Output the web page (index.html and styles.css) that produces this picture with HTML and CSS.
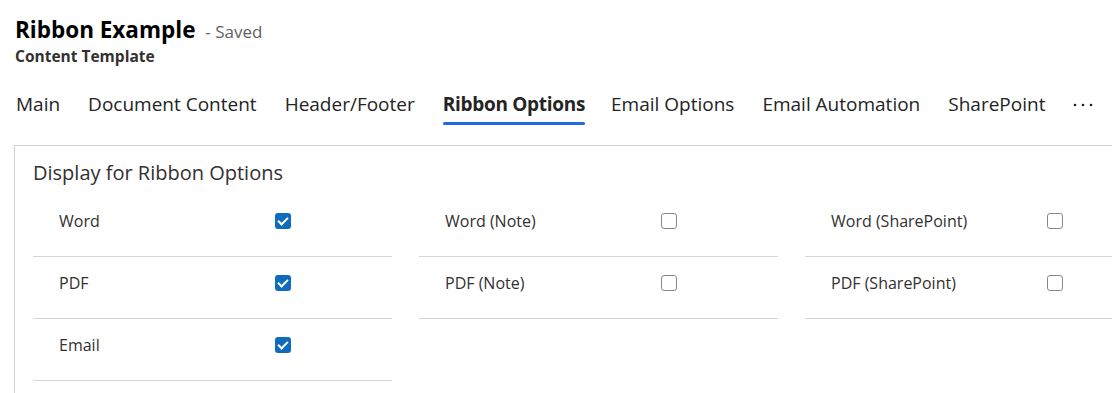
FILE: index.html
```html
<!DOCTYPE html>
<html lang="en">
<head>
    <meta charset="UTF-8">
    <meta name="viewport" content="width=device-width, initial-scale=1.0">
    <title>Ribbon Example - Content Template</title>
    <link rel="stylesheet" href="styles.css">
</head>
<body>
    <!-- Record header -->
    <header class="record-header">
        <h1 class="record-title">Ribbon Example <span class="record-status">- Saved</span></h1>
        <div class="record-type">Content Template</div>
    </header>

    <!-- Tabs -->
    <nav class="tabs">
        <a class="tab">Main</a>
        <a class="tab">Document Content</a>
        <a class="tab">Header/Footer</a>
        <a class="tab active">Ribbon Options</a>
        <a class="tab">Email Options</a>
        <a class="tab">Email Automation</a>
        <a class="tab">SharePoint</a>
        <a class="tab more" aria-label="More tabs">
            <svg width="22" height="6" viewBox="0 0 22 6"><circle cx="2" cy="3" r="1.3"/><circle cx="10" cy="3" r="1.3"/><circle cx="18" cy="3" r="1.3"/></svg>
        </a>
    </nav>

    <!-- Section -->
    <section class="section">
        <h2>Display for Ribbon Options</h2>
        <div class="fields">
            <div class="column">
                <div class="field"><span>Word</span><span class="check checked"></span></div>
                <div class="field"><span>PDF</span><span class="check checked"></span></div>
                <div class="field"><span>Email</span><span class="check checked"></span></div>
            </div>
            <div class="column">
                <div class="field"><span>Word (Note)</span><span class="check"></span></div>
                <div class="field"><span>PDF (Note)</span><span class="check"></span></div>
            </div>
            <div class="column">
                <div class="field"><span>Word (SharePoint)</span><span class="check"></span></div>
                <div class="field"><span>PDF (SharePoint)</span><span class="check"></span></div>
            </div>
        </div>
    </section>
</body>
</html>
```

FILE: styles.css
```css
body {
    font-family: "Open Sans", "Noto Sans", Arial, sans-serif;
    margin: 0;
    padding: 16px 0 0;
    background-color: #fff;
    color: #242424;
    overflow: hidden;
}
.record-header {
    padding-left: 15px;
}
.record-title {
    margin: 0;
    font-size: 22.5px;
    line-height: 28px;
    font-weight: 700;
    color: #000;
}
.record-status {
    margin-left: 4px;
    font-size: 17px;
    font-weight: 400;
    color: #616161;
}
.record-type {
    font-size: 15.5px;
    line-height: 20px;
    font-weight: 700;
    color: #323130;
}
.tabs {
    display: flex;
    margin-top: 14px;
    padding-left: 2px;
}
.tab {
    padding: 12px 14px 0;
    font-size: 19px;
    line-height: 24px;
    color: #242424;
    white-space: nowrap;
    cursor: pointer;
}
.tab::after {
    content: "";
    display: block;
    height: 3px;
    margin-top: 6px;
    border-radius: 2px;
}
.tab.active {
    font-weight: 700;
    letter-spacing: -0.3px;
    padding-right: 12px;
}
.tab.active::after {
    background-color: #1f6ae0;
}
.tab.more svg {
    display: block;
    margin-top: 10px;
    fill: #242424;
}
.tab.more::after {
    margin-top: 11px;
}
.section {
    margin: 20px 0 0 14px;
    min-height: 235px;
    overflow: hidden;
    border-top: 1px solid #d1d1d1;
    border-left: 1px solid #d1d1d1;
    padding: 13px 0 0 18px;
}
.section h2 {
    margin: 0;
    font-size: 20px;
    line-height: 28px;
    font-weight: 400;
    color: #323130;
}
.fields {
    display: grid;
    grid-template-columns: repeat(3, 359px);
    column-gap: 27px;
    margin-top: 8px;
}
.field {
    display: grid;
    grid-template-columns: 216px 16px;
    align-items: start;
    height: 61px;
    padding-left: 26px;
    border-bottom: 1px solid #d6d6d6;
    font-size: 16px;
    line-height: 22px;
    color: #323130;
}
.field span:first-child {
    padding-top: 15px;
}
.check {
    width: 16px;
    height: 16px;
    margin-top: 18px;
    box-sizing: border-box;
    border: 1.5px solid #8a8886;
    border-radius: 3px;
}
.check.checked {
    position: relative;
    border: none;
    background-color: #0f6cbd;
}
.check.checked::after {
    content: "";
    position: absolute;
    left: 5px;
    top: 2px;
    width: 4px;
    height: 8px;
    border: solid #fff;
    border-width: 0 2px 2px 0;
    transform: rotate(45deg);
}
```
